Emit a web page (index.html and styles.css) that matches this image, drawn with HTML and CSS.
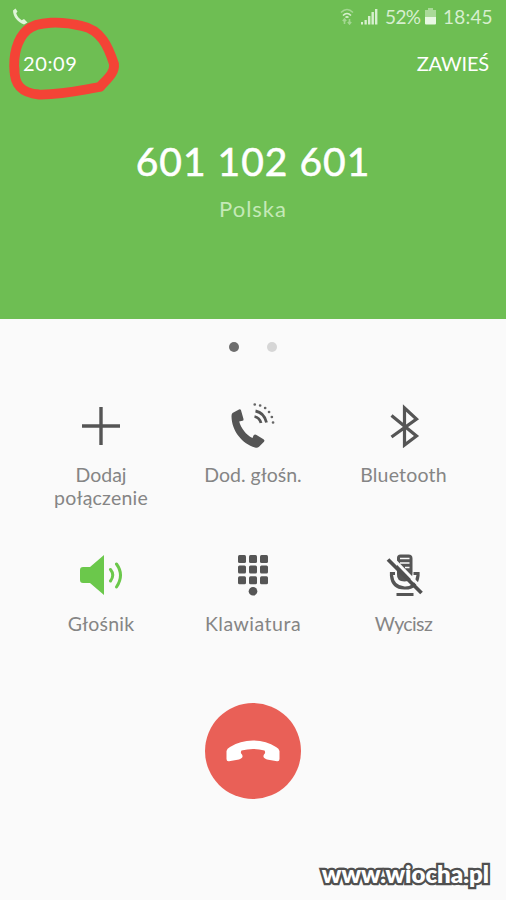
FILE: index.html
```html
<!DOCTYPE html>
<html lang="pl">
<head>
<meta charset="utf-8">
<title>Połączenie</title>
<link rel="stylesheet" href="styles.css">
</head>
<body>
<main class="screen">
  <header class="call-header">
    <div class="status-bar">
      <svg class="status-phone" width="16" height="18" viewBox="0 0 16 18"><path d="M3.500.5 1 2.500C1 9 6 14 12 16.500l3.500-2-3.500-3.500-2.300 1.200C7 10.500 5 8 4.200 5.200L5.500 3.500z"/></svg>
      <div class="status-right">
        <svg class="wifi" width="14" height="17" viewBox="0 0 14 17"><path class="faint" d="M1 4.500Q7-1.500 13 4.500"/><path d="M3 7.500Q7 3.500 11 7.500M5.500 9.500Q7 8.200 8.500 9.500"/><path class="faint" d="M4.500 16v-5M2.800 13l1.700-2 1.700 2M9.500 11v5M7.800 14l1.700 2 1.700-2"/></svg>
        <svg class="signal" width="17" height="17" viewBox="0 0 17 17"><path d="M0 14h2v2.500H0zM3.500 12h2.300v4.500H3.500zM7 8h2.400v8.500H7zM10.500 4h2.400v12.500h-2.400zM14 1h2.400v15.500H14z"/></svg>
        <span class="battery-level">52%</span>
        <svg class="battery" width="11" height="17" viewBox="0 0 11 17"><path class="empty" d="M3 0h5v2h3v7H0V2h3z"/><path d="M0 9h11v6.500q0 1-1 1H1q-1 0-1-1z"/></svg>
        <span class="clock">18:45</span>
      </div>
    </div>
    <div class="call-bar">
      <span class="duration">20:09</span>
      <span class="hold">ZAWIEŚ</span>
    </div>
    <div class="number">601 102 601</div>
    <div class="country">Polska</div>
    <svg class="marker" width="130" height="110" viewBox="0 0 130 110"><path d="M14.500 72C13 55 17 39 27 30C37 21 62 21 82 26C101 30 108 46 114 64C115 73 107 79 100 87C82 90 61 95 39 94.500C21 93 14 85 14.500 68"/></svg>
  </header>

  <nav class="pager"><i class="dot active"></i><i class="dot"></i></nav>

  <section class="actions">
    <div class="action">
      <svg width="50" height="50" viewBox="0 0 50 50"><path class="line" d="M25 6v38M6 25h38"/></svg>
      <span class="label add">Dodaj<br><span class="connection">połączenie</span></span>
    </div>
    <div class="action">
      <svg width="50" height="50" viewBox="0 0 50 50"><path class="solid" d="M4.500 12 11 8.500q1.500-.5 2 .8L15.500 18q.2 1.500-1 1.700l-3.300.8C13 27 18 34 24.500 37l1-2.500q1.300-1.500 3-.5l7 4.200q1.600 1 .5 2.500l-5 5q-1.500 1.500-4 .8C14.500 43 3.500 30 3.500 15q0-2 1-3z"/><path class="wave" d="M26.500 15.500q5 1 6.500 6.500M27.500 10q8.500 1.500 11 11.500"/><path class="points" d="M26.700 3.500h.1M32.100 4.500h.1M37.100 7h.1M41 11h.1M43.800 16h.1M45 21.500h.1"/></svg>
      <span class="label extra">Dod. głośn.</span>
    </div>
    <div class="action">
      <svg width="50" height="50" viewBox="0 0 50 50"><path class="bluetooth" d="M11.500 14.500 36.500 35 24.500 44V7l12 11-25 18"/></svg>
      <span class="label bt">Bluetooth</span>
    </div>
    <div class="action">
      <svg width="50" height="50" viewBox="0 0 50 50"><path class="speaker" d="M7 17h7L28 5v40L14 33H7q-3 0-3-3V20q0-3 3-3z"/><path class="sound" d="M34.500 19.500q4.500 5.500 0 11.500M40.500 14q8 11 0 23"/></svg>
      <span class="label spk">Głośnik</span>
    </div>
    <div class="action">
      <svg width="50" height="50" viewBox="0 0 50 50"><g class="solid"><rect x="10" y="5" width="8" height="8" rx="1.500"/><rect x="21" y="5" width="8" height="8" rx="1.500"/><rect x="32" y="5" width="8" height="8" rx="1.500"/><rect x="10" y="15.500" width="8" height="8" rx="1.500"/><rect x="21" y="15.500" width="8" height="8" rx="1.500"/><rect x="32" y="15.500" width="8" height="8" rx="1.500"/><rect x="10" y="26.200" width="8" height="8" rx="1.500"/><rect x="21" y="26.200" width="8" height="8" rx="1.500"/><rect x="32" y="26.200" width="8" height="8" rx="1.500"/><circle cx="25" cy="41.300" r="4.300"/></g></svg>
      <span class="label keys">Klawiatura</span>
    </div>
    <div class="action">
      <svg width="50" height="50" viewBox="0 0 50 50"><path class="solid" d="M17 8q0-3.500 3.500-3.500h8q4 0 4 4v15q0 8-8 8T17 24z"/><path class="gap" d="M20 8.500h9.500M20 13h9.500M25 17.500h4.500"/><path class="mic" d="M15 23.500h-3.500v2q1 12 13 12.500T38 25.500v-2h-4.500"/><path class="solid" d="M16.500 43h17v3h-17z"/><path class="slash-gap" d="m11 6.500 33 34"/><path class="slash" d="m8 9.500 33.500 33.500"/></svg>
      <span class="label mute">Wycisz</span>
    </div>
  </section>

  <div class="hangup">
    <svg width="54" height="22" viewBox="0 0 54 22"><path d="M.5 11Q1 8.500 4 7 14 .5 27 .5T50 7q3 1.500 3.500 4v8q0 2.500-2.500 2.200L41 19.500Q36 18 38 14.500q2-1.500.5-4Q27 7.500 15.500 10.500q-1.500 2.500.5 4 2 3.500-3 5L3 21.200Q.5 21.500.5 19z"/></svg>
  </div>
  <footer class="watermark">www.wiocha.pl</footer>
</main>
</body>
</html>
```

FILE: styles.css
```css
* { box-sizing: border-box; }
body { margin: 0; font-family: Lato, "Open Sans", sans-serif; }
svg { display: block; fill: none; flex: none; }
.screen { width: 506px; height: 900px; background: #fafafa; overflow: hidden; display: flex; flex-direction: column; }

.call-header { position: relative; height: 319px; flex: none; background: #6ebe53; color: #fff; }
.status-bar { height: 34px; padding: 8px 13px 0 12px; display: flex; justify-content: space-between; }
.status-phone { fill: #e0f5d9; }
.status-right { display: flex; height: 18px; line-height: 18px; font-size: 19px; color: #d7efcf; }
.wifi { stroke: #d7efcf; stroke-width: 1.6; margin-right: 7px; }
.wifi .faint { opacity: .5; }
.signal { fill: #d7efcf; margin-right: 7px; }
.battery-level { width: 40px; letter-spacing: -.6px; }
.battery { fill: #e8f8e3; margin-right: 7px; }
.battery .empty { fill: #a9d998; }
.clock { width: 50px; letter-spacing: .2px; }
.call-bar { height: 60px; padding: 0 17px 0 23px; display: flex; justify-content: space-between; line-height: 59px; font-size: 20px; }
.duration { letter-spacing: .6px; }
.hold { letter-spacing: -.2px; }
.number { margin-top: 42px; height: 52px; line-height: 50px; text-align: center; font-size: 39px; letter-spacing: 1px; -webkit-text-stroke: .6px #fff; }
.country { margin-top: 5px; height: 32px; line-height: 31px; text-align: center; font-size: 22px; letter-spacing: 1px; color: #c4e9b7; }
.marker { position: absolute; left: 0; top: 0; stroke: #f44336; stroke-width: 9.8; stroke-linecap: round; stroke-linejoin: round; }

.pager { height: 55px; flex: none; display: flex; justify-content: center; align-items: center; gap: 28px; }
.dot { width: 10px; height: 10px; border-radius: 50%; background: #d6d6d6; }
.dot.active { background: #6d6d6d; }

.actions { margin-top: 27px; padding: 0 25px; display: grid; grid-template-columns: repeat(3, 152px); grid-template-rows: 149px 149px; flex: none; }
.action { display: flex; flex-direction: column; align-items: center; }
.label { margin-top: 12px; line-height: 23px; text-align: center; font-size: 19.5px; color: #858585; white-space: nowrap; }
.connection, .spk, .bt { letter-spacing: .2px; }
.keys { letter-spacing: .5px; }
.mute { letter-spacing: -.6px; }
.bt, .mute { margin-right: 3px; }
.solid { fill: #555; }
.line { stroke: #555; stroke-width: 3.4; }
.wave { stroke: #555; stroke-width: 2.8; }
.points { stroke: #666; stroke-width: 2.6; stroke-linecap: round; }
.bluetooth { stroke: #555; stroke-width: 3.2; }
.speaker { fill: #6bc84b; }
.sound { stroke: #6bc84b; stroke-width: 3; stroke-linecap: round; }
.gap { stroke: #fafafa; stroke-width: 1.6; }
.mic { stroke: #555; stroke-width: 3.2; }
.slash-gap { stroke: #fafafa; stroke-width: 3; }
.slash { stroke: #4f4f4f; stroke-width: 3.8; }

.hangup { width: 96px; height: 96px; margin: 4px auto 0; flex: none; border-radius: 50%; background: #e96057; display: flex; align-items: center; justify-content: center; }
.hangup svg { fill: #fff; }
.watermark { margin: 58px 17px 0 auto; line-height: 34px; font-family: Lato, sans-serif; font-size: 24px; font-weight: 800; color: #fff; -webkit-text-stroke: 4.5px #505050; paint-order: stroke fill; stroke-linejoin: round; }
```
